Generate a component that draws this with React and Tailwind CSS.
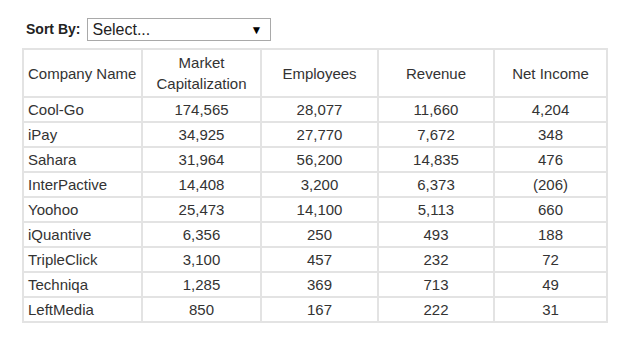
import React from "react";

const rows = [
  ["Cool-Go", "174,565", "28,077", "11,660", "4,204"],
  ["iPay", "34,925", "27,770", "7,672", "348"],
  ["Sahara", "31,964", "56,200", "14,835", "476"],
  ["InterPactive", "14,408", "3,200", "6,373", "(206)"],
  ["Yoohoo", "25,473", "14,100", "5,113", "660"],
  ["iQuantive", "6,356", "250", "493", "188"],
  ["TripleClick", "3,100", "457", "232", "72"],
  ["Techniqa", "1,285", "369", "713", "49"],
  ["LeftMedia", "850", "167", "222", "31"],
];

export default function App() {
  return (
    <div
      className="w-[636px] h-[346px] bg-white text-[#333] pl-[22px] pt-[18px]"
      style={{ fontFamily: '"Liberation Sans", Arial, sans-serif' }}
    >
      <div className="flex items-center h-[23px]">
        <span className="ml-[4px] text-[14px] font-bold text-[#222] mr-[7px]">Sort By:</span>
        <div className="w-[184px] h-[23px] border border-[#a9a9a9] flex items-center justify-between pl-[4px] pr-[8px] text-[16px] text-[#222]">
          <span>Select...</span>
          <span className="text-[12px] text-black">▼</span>
        </div>
      </div>
      <table className="mt-[7px] table-fixed border-collapse w-[584px] text-[15px] leading-[21px]">
        <colgroup>
          <col className="w-[119px]" />
          <col className="w-[119px]" />
          <col className="w-[117px]" />
          <col className="w-[116px]" />
          <col className="w-[113px]" />
        </colgroup>
        <thead>
          <tr>
            <th className="border-2 border-[#e3e3e3] font-normal text-left pl-[4px] py-[2px]">Company Name</th>
            <th className="border-2 border-[#e3e3e3] font-normal text-center py-[2px]">Market<br />Capitalization</th>
            <th className="border-2 border-[#e3e3e3] font-normal text-center py-[2px]">Employees</th>
            <th className="border-2 border-[#e3e3e3] font-normal text-center py-[2px]">Revenue</th>
            <th className="border-2 border-[#e3e3e3] font-normal text-center py-[2px]">Net Income</th>
          </tr>
        </thead>
        <tbody>
          {rows.map((r) => (
            <tr key={r[0]}>
              <td className="border-2 border-[#e3e3e3] text-left pl-[4px] py-[1px]">{r[0]}</td>
              <td className="border-2 border-[#e3e3e3] text-center py-[1px]">{r[1]}</td>
              <td className="border-2 border-[#e3e3e3] text-center py-[1px]">{r[2]}</td>
              <td className="border-2 border-[#e3e3e3] text-center py-[1px]">{r[3]}</td>
              <td className="border-2 border-[#e3e3e3] text-center py-[1px]">{r[4]}</td>
            </tr>
          ))}
        </tbody>
      </table>
    </div>
  );
}
